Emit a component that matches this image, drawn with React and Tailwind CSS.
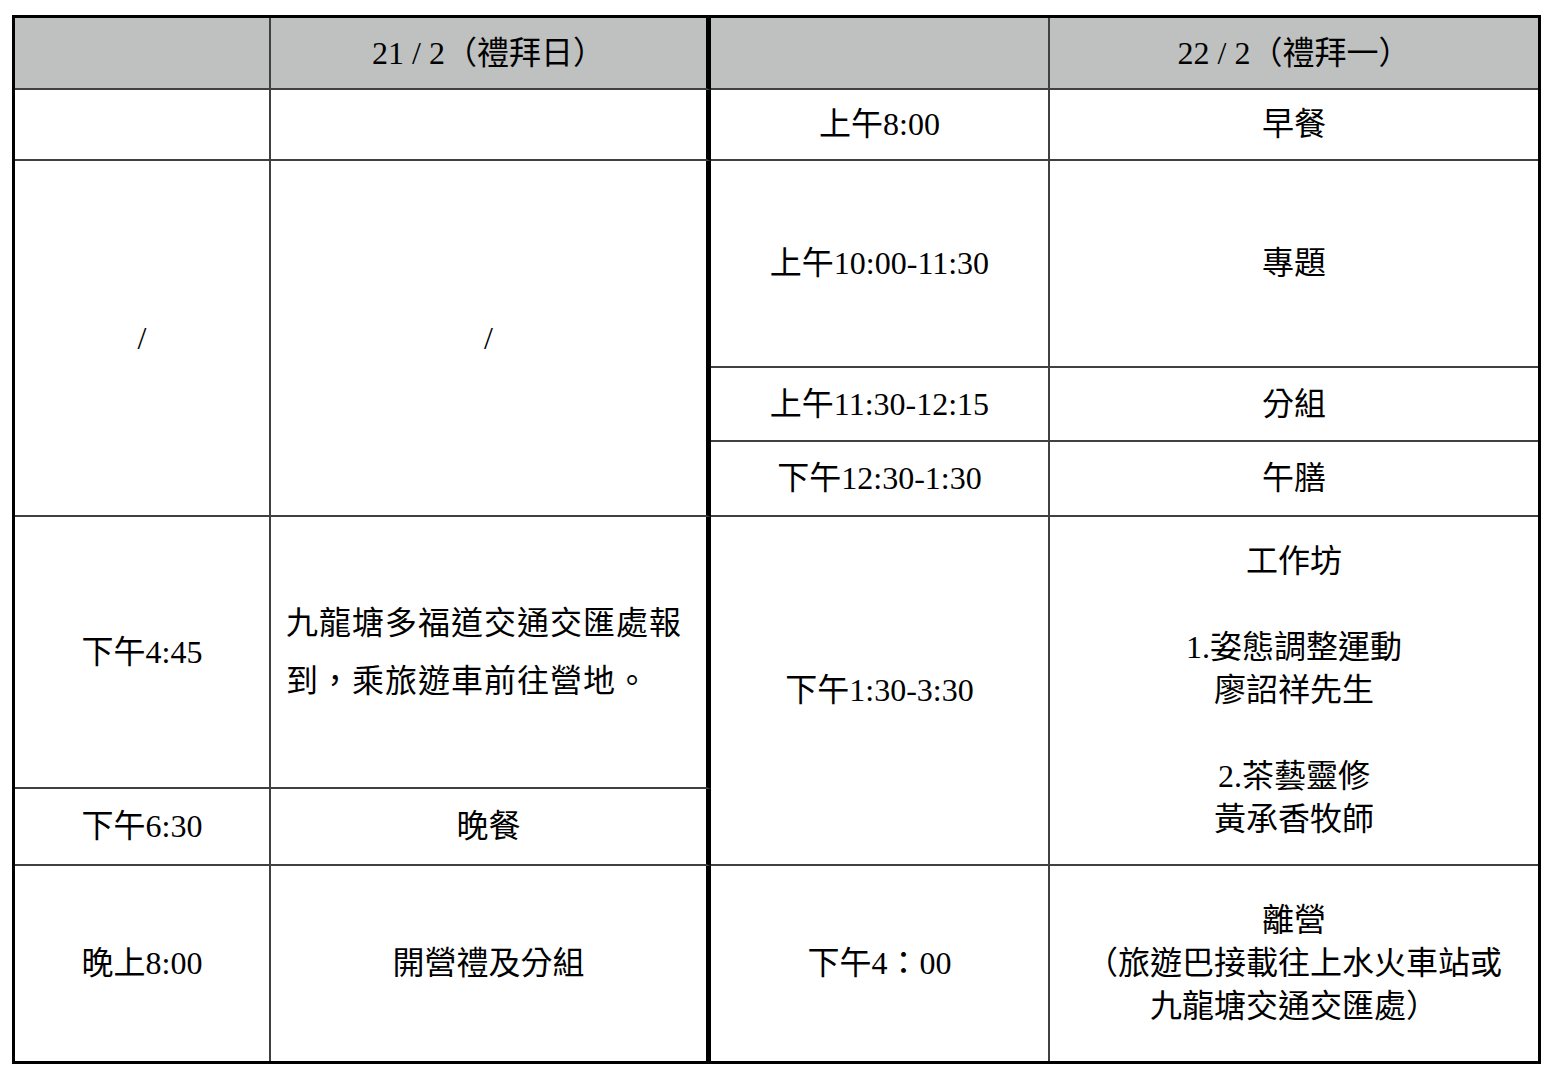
const line = 'border-b-2 border-[#404040]';

const Cell = ({ children, className = '', rowSpan, last, mid, bottom }) => (
  <td
    rowSpan={rowSpan}
    className={`p-0 text-center align-middle leading-[43px] ${bottom ? '' : line} ${
      last ? '' : mid ? 'border-r-[5px] border-r-black' : 'border-r-2 border-r-[#404040]'
    } ${className}`}
  >
    {children}
  </td>
);

export default function App() {
  return (
    <div className="min-h-screen bg-white pl-3 pt-[15px] text-[32px] text-black [font-family:'Liberation_Serif','Noto_Sans_CJK_TC',serif]">
      <table className="w-[1529px] table-fixed border-separate border-spacing-0 border-[3px] border-black">
        <colgroup>
          <col className="w-[256px]" />
          <col className="w-[440px]" />
          <col className="w-[339px]" />
          <col className="w-[488px]" />
        </colgroup>
        <tbody>
          <tr className="h-[72px] bg-[#bfc1c0]">
            <Cell />
            <Cell mid>21 / 2（禮拜日）</Cell>
            <Cell />
            <Cell last>22 / 2（禮拜一）</Cell>
          </tr>
          <tr className="h-[71px]">
            <Cell />
            <Cell mid />
            <Cell>上午8:00</Cell>
            <Cell last>早餐</Cell>
          </tr>
          <tr className="h-[207px]">
            <Cell rowSpan={3}>/</Cell>
            <Cell rowSpan={3} mid>/</Cell>
            <Cell>上午10:00-11:30</Cell>
            <Cell last>專題</Cell>
          </tr>
          <tr className="h-[74px]">
            <Cell>上午11:30-12:15</Cell>
            <Cell last>分組</Cell>
          </tr>
          <tr className="h-[75px]">
            <Cell>下午12:30-1:30</Cell>
            <Cell last>午膳</Cell>
          </tr>
          <tr className="h-[272px]">
            <Cell>下午4:45</Cell>
            <Cell mid className="whitespace-nowrap pl-[15px] text-left !leading-[58px] tracking-[1px]">
              九龍塘多福道交通交匯處報
              <br />
              到，乘旅遊車前往營地。
            </Cell>
            <Cell rowSpan={2}>下午1:30-3:30</Cell>
            <Cell rowSpan={2} last>
              工作坊
              <br />
              <br />
              1.姿態調整運動
              <br />
              廖詔祥先生
              <br />
              <br />
              2.茶藝靈修
              <br />
              黃承香牧師
            </Cell>
          </tr>
          <tr className="h-[77px]">
            <Cell>下午6:30</Cell>
            <Cell mid>晚餐</Cell>
          </tr>
          <tr className="h-[195px]">
            <Cell bottom>晚上8:00</Cell>
            <Cell bottom mid>開營禮及分組</Cell>
            <Cell bottom>下午4：00</Cell>
            <Cell bottom last>
              離營
              <br />
              （旅遊巴接載往上水火車站或
              <br />
              九龍塘交通交匯處）
            </Cell>
          </tr>
        </tbody>
      </table>
    </div>
  );
}
